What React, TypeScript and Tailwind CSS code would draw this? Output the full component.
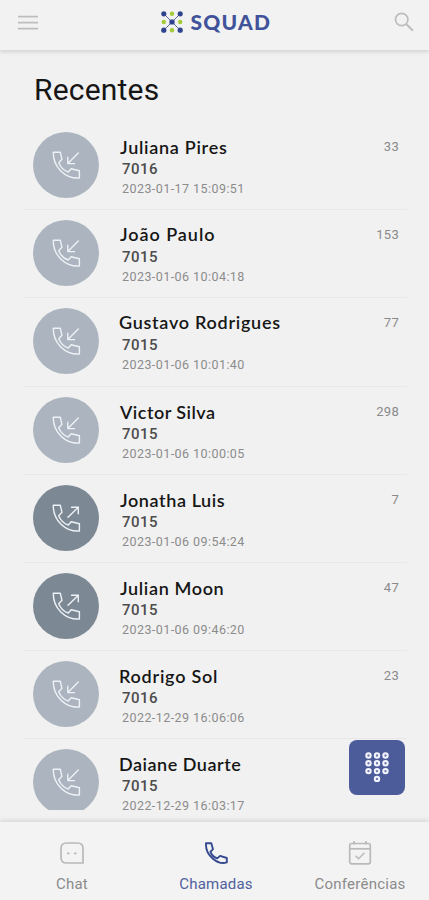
import React from 'react';
import { clsx } from 'clsx';

type Direction = 'in' | 'out';

interface Call {
  name: string;
  extension: string;
  date: string;
  count?: number;
  direction: Direction;
  nameClass: string;
}

const calls: Call[] = [
  { name: 'Juliana Pires', extension: '7016', date: '2023-01-17 15:09:51', count: 33, direction: 'in', nameClass: 'tracking-[0.72px]' },
  { name: 'João Paulo', extension: '7015', date: '2023-01-06 10:04:18', count: 153, direction: 'in', nameClass: '-mt-px mb-px tracking-[0.95px]' },
  { name: 'Gustavo Rodrigues', extension: '7015', date: '2023-01-06 10:01:40', count: 77, direction: 'in', nameClass: '-mt-px mb-px -ml-px tracking-[0.72px]' },
  { name: 'Victor Silva', extension: '7015', date: '2023-01-06 10:00:05', count: 298, direction: 'in', nameClass: 'tracking-[0.48px]' },
  { name: 'Jonatha Luis', extension: '7015', date: '2023-01-06 09:54:24', count: 7, direction: 'out', nameClass: 'tracking-[0.6px]' },
  { name: 'Julian Moon', extension: '7015', date: '2023-01-06 09:46:20', count: 47, direction: 'out', nameClass: 'tracking-[0.65px]' },
  { name: 'Rodrigo Sol', extension: '7016', date: '2022-12-29 16:06:06', count: 23, direction: 'in', nameClass: '-ml-px tracking-[0.75px]' },
  { name: 'Daiane Duarte', extension: '7015', date: '2022-12-29 16:03:17', direction: 'in', nameClass: '-ml-px tracking-[0.52px]' },
];

const CallIcon = ({ direction }: { direction: Direction }) => (
  <svg className="h-[30px] w-[30px]" viewBox="0 0 30 30" fill="none" stroke="#eef1f5" strokeWidth="1.4" strokeLinejoin="round" strokeLinecap="round">
    <path d="M2.3 2.3H9.3L11 9.3L7.7 12.7C9.5 17 13 20.7 17.3 22L20.2 18.8L28.4 20.8V28C14.5 28.8 2 17.5 2.3 2.3Z" />
    {direction === 'in' ? (
      <path d="M27.3 3L16.8 13.6M16.8 7.3V13.6H23.5" />
    ) : (
      <path d="M17 14.3L27.3 4.2M20.5 4.2H27.3V10.8" />
    )}
  </svg>
);

const SquadLogo = () => (
  <svg className="h-6 w-6" viewBox="0 0 24 24">
    <path d="M4 4L20 20M20 4L4 20" stroke="#5b6c9c" strokeWidth="1" />
    <g fill="#2f448e">
      <circle cx="3.8" cy="3.8" r="2.6" />
      <circle cx="20.2" cy="3.8" r="2.6" />
      <circle cx="3.8" cy="20.2" r="2.6" />
      <circle cx="20.2" cy="20.2" r="2.6" />
      <rect x="9.4" y="9.4" width="5.2" height="5.2" rx="1.6" />
    </g>
    <g fill="#a3cb38">
      <circle cx="12" cy="3.8" r="2.2" />
      <circle cx="3.8" cy="12" r="2.2" />
      <circle cx="20.2" cy="12" r="2.2" />
      <circle cx="12" cy="20.2" r="2.2" />
    </g>
  </svg>
);

const Header = () => (
  <header className="relative z-10 flex h-[50px] shrink-0 items-start justify-between bg-[#f2f2f2] pr-[15px] pl-[18px] shadow-[0_2px_4px_rgba(0,0,0,0.13)]">
    <svg className="mt-[15px] h-4 w-5" viewBox="0 0 20 16" stroke="#bdbdbd" strokeWidth="1.8">
      <path d="M0 1.7H20M0 7.7H20M0 13.7H20" />
    </svg>
    <div className="mt-[10px] flex h-6 items-center gap-[7px]">
      <SquadLogo />
      <span className="w-[82px] font-['Lato'] text-[21px] leading-6 font-black tracking-[1.2px] whitespace-nowrap text-[#40529a]">SQUAD</span>
    </div>
    <svg className="mt-[12px] h-5 w-5" viewBox="0 0 20 20" fill="none" stroke="#bdbdbd" strokeWidth="1.7">
      <circle cx="7.7" cy="7.5" r="6.2" />
      <path d="M12.2 12L19 18.7" strokeWidth="2" />
    </svg>
  </header>
);

const CallRow = ({ call, clipped }: { call: Call; clipped: boolean }) => (
  <li className="ml-[23px] flex h-[88.2px] w-[384px] shrink-0 items-start border-b border-[#e8e8e8] pr-[8px] pl-[10px]">
    <div className={clsx('mt-[10px] w-[66px] shrink-0 overflow-hidden', clipped ? 'h-[61px]' : 'h-[66px]')}>
      <div
        className={clsx(
          'flex h-[66px] items-center justify-center rounded-full',
          call.direction === 'in' ? 'bg-[#acb5bf]' : 'bg-[#7c8995]'
        )}
      >
        <CallIcon direction={call.direction} />
      </div>
    </div>
    <div className="mt-[14px] ml-[21px] flex flex-1 flex-col">
      <p className={clsx("font-['Lato'] text-[18px] leading-[22px] font-semibold whitespace-nowrap text-[#161616]", call.nameClass)}>
        {call.name}
      </p>
      <p className="mt-px ml-[2px] text-[15px] leading-[20px] font-medium tracking-[0.5px] text-[#4c4c4c]">{call.extension}</p>
      <p className="mt-px ml-[2px] text-[12.5px] leading-[17px] tracking-[0.44px] whitespace-nowrap text-[#8c8c8c]">{call.date}</p>
    </div>
    <span className="mt-[16px] text-[13px] leading-[18px] tracking-[0.3px] text-[#8a8a8a]">{call.count}</span>
  </li>
);

const keypad = [
  [4.5, 4.5], [13, 4.5], [21.5, 4.5],
  [4.5, 12.3], [13, 12.3], [21.5, 12.3],
  [4.5, 20.1], [13, 20.1], [21.5, 20.1],
  [13, 27.9],
];

const DialButton = () => (
  <button className="absolute top-[740px] left-[349px] z-10 flex h-[55px] w-[56px] items-start justify-center rounded-[8px] bg-[#4c5b99]">
    <svg className="mt-[11px] h-[33px] w-[26px]" viewBox="0 0 26 33" fill="#6f7db3" stroke="#f4f6ff" strokeWidth="2">
      {keypad.map(([cx, cy]) => (
        <circle key={`${cx}-${cy}`} cx={cx} cy={cy} r="2.2" />
      ))}
    </svg>
  </button>
);

const BottomNav = () => (
  <nav className="relative z-10 flex h-[78px] shrink-0 bg-[#f3f3f3] shadow-[0_-2px_4px_rgba(0,0,0,0.1)]">
    <div className="flex w-[144px] shrink-0 flex-col items-center text-[#8b8b8b]">
      <svg className="mt-[19px] h-6 w-6" viewBox="0 0 24 24" fill="none" stroke="#b9b9b9" strokeWidth="1.7">
        <path d="M6.5 2H17.5C21 2 23 4 23 7.5V22H6.5C3 22 1 20 1 16.5V7.5C1 4 3 2 6.5 2Z" />
        <path d="M7 12.3H9.5M14 12.3H16.5" strokeWidth="1.7" />
      </svg>
      <span className="mt-[9px] text-[15px] leading-5 tracking-[0.2px]">Chat</span>
    </div>
    <div className="flex w-[144px] shrink-0 flex-col items-center text-[#4f609d]">
      <svg className="mt-[19px] h-6 w-6" viewBox="0 0 24 24" fill="none" stroke="#34498f" strokeWidth="1.9" strokeLinejoin="round">
        <path d="M2 2.2H7.3L9 8.2L6.4 10.8C7.8 14 10 16.2 13.2 17.4L16.1 14.9L22.8 17V21.4C14.5 24.2 1 15 2 2.2Z" />
      </svg>
      <span className="mt-[9px] text-[15px] leading-5 tracking-[0.2px]">Chamadas</span>
    </div>
    <div className="flex w-[144px] shrink-0 flex-col items-center text-[#8b8b8b]">
      <svg className="mt-[19px] h-6 w-6" viewBox="0 0 24 24" fill="none" stroke="#bababa" strokeWidth="1.7">
        <rect x="1.7" y="2.5" width="20.6" height="20.3" rx="2" />
        <path d="M1.5 7.8H22.5" />
        <path d="M6 .3V3.5M18 .3V3.5" strokeWidth="2" />
        <path d="M7.5 14.8L10.5 17.8L16.5 11.8" strokeWidth="1.5" />
      </svg>
      <span className="mt-[9px] text-[15px] leading-5 tracking-[0.25px]">Conferências</span>
    </div>
  </nav>
);

const App: React.FC = () => (
  <div className="relative flex h-[900px] w-[429px] flex-col overflow-hidden bg-[#f1f1f1] font-['Roboto',sans-serif]">
    <Header />
    <main className="flex h-[772px] shrink-0 flex-col">
      <h1 className="mt-[22px] mb-[14px] ml-[34px] text-[30px] leading-[36px] tracking-[0.2px] text-[#161616]">Recentes</h1>
      <ul className="flex flex-col">
        {calls.map((call, i) => (
          <CallRow key={call.name} call={call} clipped={i === calls.length - 1} />
        ))}
      </ul>
    </main>
    <BottomNav />
    <DialButton />
  </div>
);

export default App;
